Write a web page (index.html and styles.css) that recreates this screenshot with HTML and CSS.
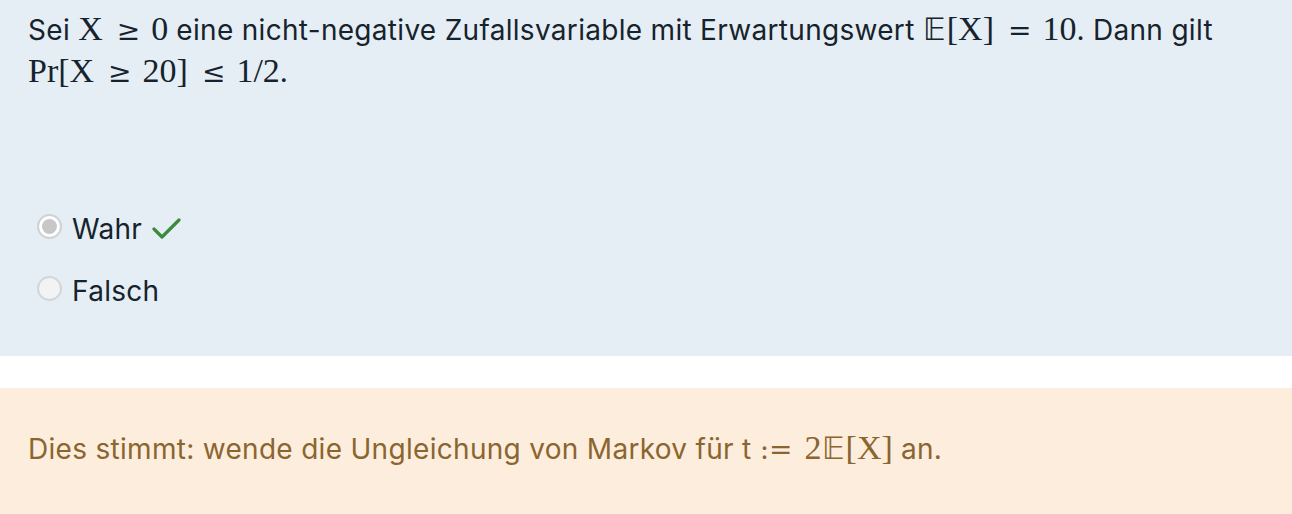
FILE: index.html
```html
<!DOCTYPE html>
<html lang="de">
<head>
<meta charset="utf-8">
<link rel="stylesheet" href="styles.css">
</head>
<body>
<section class="question">
  <p class="stem">Sei <span class="m">X<span class="rel">≥</span>0</span> eine nicht-negative Zufallsvariable mit Erwartungswert <span class="m"><span class="bb">𝔼</span>[X]<span class="rel">=</span>10</span>. Dann gilt <span class="m">Pr[X<span class="rel">≥</span>20]<span class="rel">≤</span>1/2</span>.</p>
  <div class="options">
    <div class="option">
      <span class="radio checked"></span>
      <span class="label">Wahr</span>
      <svg class="tick" width="32" height="24" viewBox="0 0 32 24"><polyline points="3,11 11,19 28,2" fill="none" stroke="#3b8a3e" stroke-width="3.2" stroke-linecap="round" stroke-linejoin="round"/></svg>
    </div>
    <div class="option">
      <span class="radio"></span>
      <span class="label">Falsch</span>
    </div>
  </div>
</section>
<section class="feedback">
  <p>Dies stimmt: wende die Ungleichung von Markov für t <span class="m"><span class="rel first">:=</span>2<span class="bb">𝔼</span>[X]</span> an.</p>
</section>
</body>
</html>
```
FILE: styles.css
```css
html, body {
  margin: 0;
  padding: 0;
  background: #ffffff;
}
body {
  font-family: Inter, "Noto Sans", sans-serif;
  font-size: 28px;
  letter-spacing: 0.3px;
  color: #16232d;
}
.question {
  background: #e6eef5;
  height: 356px;
  box-sizing: border-box;
  padding: 9px 28px 0 28px;
}
.stem {
  margin: 0;
  line-height: 42px;
}
.m {
  font-family: "Liberation Serif", "DejaVu Serif", serif;
  font-size: 34px;
  letter-spacing: 0;
  line-height: 1;
}
.rel {
  font-family: "DejaVu Serif", serif;
  font-size: 28px;
  margin: 0 11px 0 14px;
}
.rel.first {
  margin-left: 0;
  margin-right: 12px;
}
.bb {
  font-family: "DejaVu Sans", sans-serif;
  font-size: 31px;
  font-weight: 300;
  margin-right: 1px;
}
.options {
  margin-top: 114px;
  display: flex;
  flex-direction: column;
  gap: 24px;
}
.option {
  display: flex;
  align-items: center;
  height: 38px;
  padding-left: 9px;
}
.radio {
  width: 21px;
  height: 21px;
  border-radius: 50%;
  border: 2px solid #d3d6d8;
  background: #f3f3f4;
  box-sizing: content-box;
  margin-right: 10px;
  position: relative;
  flex: none;
}
.radio.checked {
  background: #ffffff;
  border-color: #cfd1d3;
}
.radio.checked::after {
  content: "";
  position: absolute;
  left: 3px;
  top: 3px;
  width: 15px;
  height: 15px;
  border-radius: 50%;
  background: #c7c7c9;
}
.label {
  line-height: 38px;
  margin-top: 6px;
}
.tick {
  margin-left: 9px;
  margin-top: 8px;
}
.feedback {
  margin-top: 32px;
  background: #fdeddc;
  height: 126px;
  box-sizing: border-box;
  padding: 39px 28px 0 28px;
  color: #8b6530;
}
.feedback p {
  margin: 0;
  line-height: 44px;
}
```
